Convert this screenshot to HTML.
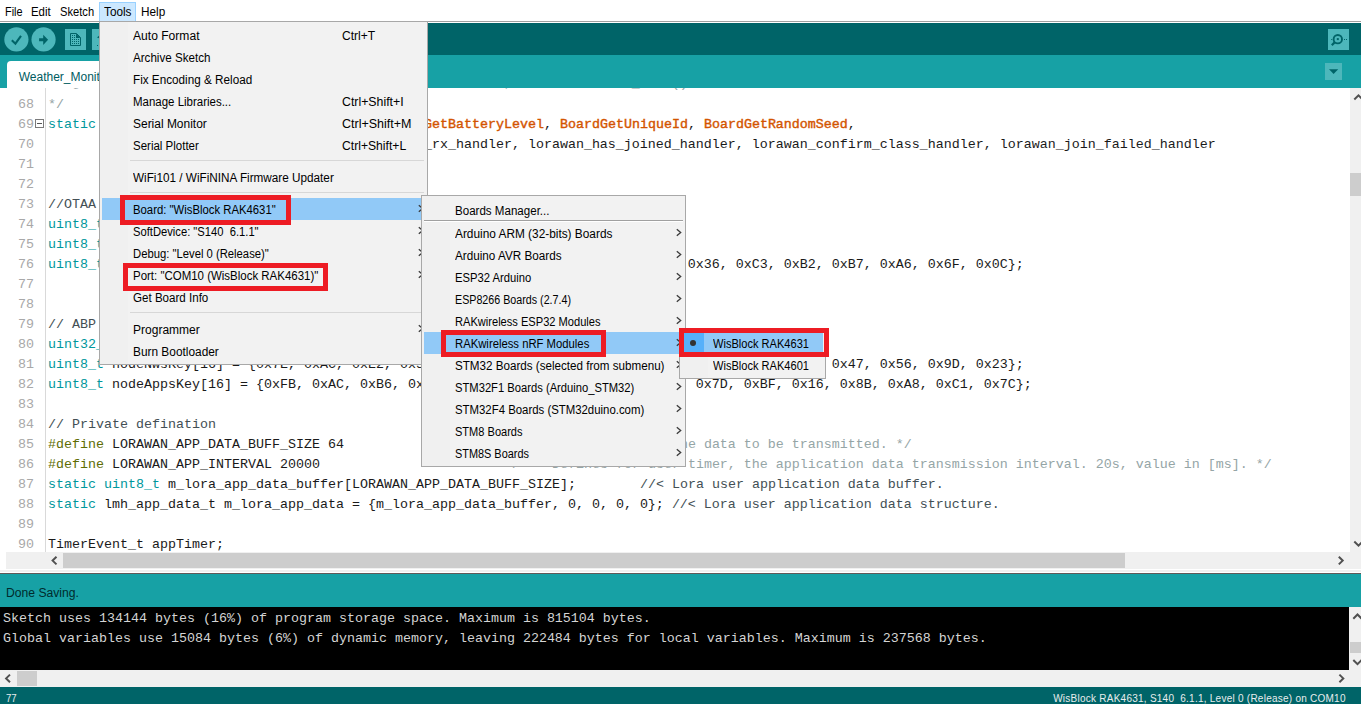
<!DOCTYPE html>
<html lang="en">
<head>
<meta charset="utf-8">
<title>Weather_Monitoring | Arduino</title>
<style>
html,body{margin:0;padding:0;}
body{width:1361px;height:704px;overflow:hidden;background:#fff;position:relative;font-family:"Liberation Sans",sans-serif;font-size:12px;color:#000;}
.abs{position:absolute;}
.t{position:absolute;white-space:pre;display:inline-block;transform-origin:0 50%;line-height:22px;height:22px;}
/* menubar */
#menubar{left:0;top:0;width:1361px;height:21px;background:#fff;border-bottom:1px solid #a0a0a0;}
#toolshl{left:99px;top:2px;width:35px;height:18px;background:#cce8ff;border:1px solid #99d1ff;}
/* toolbar */
#toolbar{left:0;top:23px;width:1361px;height:32px;background:#006468;}
#tabbar{left:0;top:55px;width:1361px;height:33px;background:#17a1a5;}
#tab{left:7px;top:61px;width:200px;height:27px;background:#fff;border-radius:4px 4px 0 0;}
.btn{background:#4db7bb;}
/* editor */
#editor{left:0;top:88px;width:1350px;height:464px;background:#fff;overflow:hidden;}
#gutterline{left:45px;top:0;width:1px;height:464px;background:#d9d9d9;}
.ln{position:absolute;left:0;height:20px;line-height:20px;white-space:pre;font-family:"Liberation Mono",monospace;font-size:13.333px;}
.ln .n{position:absolute;left:18px;top:0;color:#a8a8a8;}
.ln .c{position:absolute;left:48px;top:0;color:#1a1a1a;}
.k{color:#00979c;}
.f{color:#d35400;font-weight:normal;-webkit-text-stroke:0.4px #d35400;}
.p{color:#5e6d03;}
.cm{color:#95a5a6;}
.cs{color:#434f54;}
.fold{position:absolute;left:35px;top:4px;width:7px;height:7px;border:1px solid #7a7a7a;background:#fff;}
.fold:after{content:"";position:absolute;left:1px;top:3px;width:5px;height:1px;background:#555;}
/* scrollbars */
.sb{background:#f0f0f0;}
.th{background:#cdcdcd;}
/* status */
#status{left:0;top:574px;width:1361px;height:33px;background:#17a1a5;}
#console{left:0;top:607px;width:1349px;height:63px;background:#000;overflow:hidden;}
.cl{position:absolute;left:3px;height:20px;line-height:20px;white-space:pre;font-family:"Liberation Mono",monospace;font-size:13.333px;color:#d4d4d4;}
#bottombar{left:0;top:687px;width:1361px;height:17px;background:#006468;}
/* menus */
.menu{position:absolute;background:#f2f2f2;border:1px solid #a8a8a8;box-sizing:border-box;}
.gut{position:absolute;left:0;top:0;width:28px;height:100%;background:#f0f0f0;}
.hl{position:absolute;background:#91c9f7;}
.sep{position:absolute;height:1px;background:#d7d7d7;}
.red{position:absolute;border:5px solid #ed1c24;box-sizing:border-box;}
</style>
</head>
<body>

<!-- ===== menubar ===== -->
<div id="menubar" class="abs"></div>
<div id="toolshl" class="abs"></div>
<span class="t" style="left:4.5px;top:0.5px;font-size:12px;color:#000;transform:scaleX(0.9047)">File</span>
<span class="t" style="left:31.0px;top:0.5px;font-size:12px;color:#000;transform:scaleX(0.9523)">Edit</span>
<span class="t" style="left:60.4px;top:0.5px;font-size:12px;color:#000;transform:scaleX(0.9295)">Sketch</span>
<span class="t" style="left:103.5px;top:0.5px;font-size:12px;color:#000;transform:scaleX(0.9816)">Tools</span>
<span class="t" style="left:140.6px;top:0.5px;font-size:12px;color:#000;transform:scaleX(0.9803)">Help</span>

<!-- ===== toolbar ===== -->
<div id="toolbar" class="abs"></div>
<div id="tabbar" class="abs"></div>
<div id="tab" class="abs"></div>

<svg class="abs" style="left:0;top:23px" width="120" height="32" viewBox="0 23 120 32">
  <circle cx="16.4" cy="39.45" r="12.1" fill="#4db7bb"/>
  <path d="M11.8 40.2 L15.4 43.7 L21 35.9" fill="none" stroke="#006468" stroke-width="2.1"/>
  <circle cx="43.55" cy="39.45" r="12.1" fill="#4db7bb"/>
  <path d="M39.1 38.2 H43.2 V34.8 L48.1 39.7 L43.2 44.9 V41.2 H39.1 Z" fill="#006468"/>
  <rect x="65" y="29" width="21" height="21" fill="#4db7bb"/>
  <path d="M70.5 33.5 H76.5 L80.5 37.5 V45.5 H70.5 Z" fill="#4db7bb" stroke="#006468" stroke-width="1"/>
  <path d="M76 33.5 V38 H80.5 Z" fill="#006468"/>
  <g fill="#006468">
    <rect x="72" y="35" width="1" height="1"/><rect x="74" y="35" width="1" height="1"/>
    <rect x="72" y="37" width="1" height="1"/><rect x="74" y="37" width="1" height="1"/>
    <rect x="72" y="39" width="1" height="1"/><rect x="74" y="39" width="1" height="1"/><rect x="76" y="39" width="1" height="1"/><rect x="78" y="39" width="1" height="1"/>
    <rect x="72" y="41" width="1" height="1"/><rect x="74" y="41" width="1" height="1"/><rect x="76" y="41" width="1" height="1"/><rect x="78" y="41" width="1" height="1"/>
    <rect x="72" y="43" width="1" height="1"/><rect x="74" y="43" width="1" height="1"/><rect x="76" y="43" width="1" height="1"/><rect x="78" y="43" width="1" height="1"/>
  </g>
  <rect x="92" y="29" width="21" height="21" fill="#4db7bb"/>
  <path d="M97 37.6 L99 35.8 V38.2 Z" fill="#006468"/><rect x="97" y="45" width="1" height="1" fill="#006468"/>
</svg>
<svg class="abs" style="left:1320px;top:23px" width="41" height="65" viewBox="1320 23 41 65">
  <rect x="1328" y="29" width="21" height="21" fill="#4db7bb"/>
  <circle cx="1337.8" cy="39.2" r="4.2" fill="none" stroke="#006468" stroke-width="1.9"/>
  <rect x="1336.8" y="38.1" width="2" height="2" fill="#006468"/>
  <path d="M1334.6 42.4 L1331.8 45.2" stroke="#006468" stroke-width="2.2" fill="none"/>
  <rect x="1331.2" y="39" width="1" height="1" fill="#006468"/>
  <rect x="1344" y="39" width="1" height="1" fill="#006468"/>
  <rect x="1346" y="39" width="1" height="1" fill="#006468"/>
  <rect x="1325" y="63" width="17" height="17" fill="#4db7bb"/>
  <path d="M1329 69.2 H1338.2 L1333.6 74 Z" fill="#006468"/>
</svg>


<!-- ===== editor ===== -->
<div id="editor" class="abs">
<div id="gutterline" class="abs"></div>
<div class="ln" style="top:-14px"><span class="n">67</span><span class="c"><span class="cm">/**@brief Structure containing LoRaWan callback functions, needed for lmh_init()</span></span></div>
<div class="ln" style="top:7px"><span class="n">68</span><span class="c"><span class="cm">*/</span></span></div>
<div class="ln" style="top:27px"><span class="n">69</span><span class="fold"></span><span class="c"><span class="k">static</span> lmh_callback_t g_lora_callbacks = {<span class="f">BoardGetBatteryLevel</span>, <span class="f">BoardGetUniqueId</span>, <span class="f">BoardGetRandomSeed</span>,</span></div>
<div class="ln" style="top:47px"><span class="n">70</span><span class="c">                                        lorawan_rx_handler, lorawan_has_joined_handler, lorawan_confirm_class_handler, lorawan_join_failed_handler</span></div>
<div class="ln" style="top:67px"><span class="n">71</span><span class="c"></span></div>
<div class="ln" style="top:87px"><span class="n">72</span><span class="c"></span></div>
<div class="ln" style="top:107px"><span class="n">73</span><span class="c"><span class="cs">//OTAA keys !!!! KEYS ARE MSB !!!!</span></span></div>
<div class="ln" style="top:127px"><span class="n">74</span><span class="c"><span class="k">uint8_t</span> nodeDeviceEUI[8] = {0x00, 0x95, 0x64, 0x1F, 0xDA, 0x91, 0x19, 0x0B};</span></div>
<div class="ln" style="top:147px"><span class="n">75</span><span class="c"><span class="k">uint8_t</span> nodeAppEUI[8] = {0x70, 0xB3, 0xD5, 0x7E, 0xD0, 0x02, 0x01, 0xE1};</span></div>
<div class="ln" style="top:167px"><span class="n">76</span><span class="c"><span class="k">uint8_t</span> nodeAppKey[16] = {0x07, 0xC0, 0x82, 0x0C, 0x30, 0xB9, 0x08, 0x70, 0x0C, 0x36, 0xC3, 0xB2, 0xB7, 0xA6, 0x6F, 0x0C};</span></div>
<div class="ln" style="top:187px"><span class="n">77</span><span class="c"></span></div>
<div class="ln" style="top:207px"><span class="n">78</span><span class="c"></span></div>
<div class="ln" style="top:227px"><span class="n">79</span><span class="c"><span class="cs">// ABP keys</span></span></div>
<div class="ln" style="top:247px"><span class="n">80</span><span class="c"><span class="k">uint32_t</span> nodeDevAddr = 0x260116F8;</span></div>
<div class="ln" style="top:267px"><span class="n">81</span><span class="c"><span class="k">uint8_t</span> nodeNwsKey[16] = {0x7E, 0xAC, 0xE2, 0x55, 0xB8, 0xA5, 0xE2, 0x69, 0x91, 0x51, 0x96, 0x06, 0x47, 0x56, 0x9D, 0x23};</span></div>
<div class="ln" style="top:287px"><span class="n">82</span><span class="c"><span class="k">uint8_t</span> nodeAppsKey[16] = {0xFB, 0xAC, 0xB6, 0x47, 0xF3, 0x58, 0x45, 0xC7, 0x50, 0x7D, 0xBF, 0x16, 0x8B, 0xA8, 0xC1, 0x7C};</span></div>
<div class="ln" style="top:307px"><span class="n">83</span><span class="c"></span></div>
<div class="ln" style="top:327px"><span class="n">84</span><span class="c"><span class="cs">// Private defination</span></span></div>
<div class="ln" style="top:347px"><span class="n">85</span><span class="c"><span class="p">#define</span> LORAWAN_APP_DATA_BUFF_SIZE 64                     <span class="cm">/**&lt; buffer size of the data to be transmitted. */</span></span></div>
<div class="ln" style="top:367px"><span class="n">86</span><span class="c"><span class="p">#define</span> LORAWAN_APP_INTERVAL 20000                        <span class="cm">/**&lt; Defines for user timer, the application data transmission interval. 20s, value in [ms]. */</span></span></div>
<div class="ln" style="top:387px"><span class="n">87</span><span class="c"><span class="k">static</span> <span class="k">uint8_t</span> m_lora_app_data_buffer[LORAWAN_APP_DATA_BUFF_SIZE];        <span class="cs">//&lt; Lora user application data buffer.</span></span></div>
<div class="ln" style="top:407px"><span class="n">88</span><span class="c"><span class="k">static</span> lmh_app_data_t m_lora_app_data = {m_lora_app_data_buffer, 0, 0, 0, 0}; <span class="cs">//&lt; Lora user application data structure.</span></span></div>
<div class="ln" style="top:427px"><span class="n">89</span><span class="c"></span></div>
<div class="ln" style="top:447px"><span class="n">90</span><span class="c">TimerEvent_t appTimer;</span></div>
</div>


<!-- editor vertical scrollbar -->
<div class="abs sb" style="left:1350px;top:88px;width:11px;height:464px;"></div>
<div class="abs th" style="left:1350px;top:173px;width:11px;height:23px;"></div>
<!-- editor horizontal scrollbar -->
<div class="abs sb" style="left:6px;top:552px;width:1355px;height:17px;"></div>
<div class="abs th" style="left:63px;top:553px;width:1062px;height:15px;"></div>
<!-- console scrollbars -->
<div class="abs sb" style="left:1349px;top:607px;width:12px;height:63px;"></div>
<div class="abs th" style="left:1350px;top:642px;width:11px;height:11px;"></div>
<div class="abs sb" style="left:0;top:670px;width:1361px;height:17px;"></div>
<div class="abs th" style="left:17px;top:671px;width:20px;height:15px;"></div>
<svg class="abs" style="left:0;top:0" width="1361" height="704" viewBox="0 0 1361 704" fill="none" stroke="#505050" stroke-width="2">
  <path d="M1354.3 99.5 L1358.5 95.3 L1362.7 99.5"/>
  <path d="M1354.3 541.5 L1358.5 545.7 L1362.7 541.5"/>
  <path d="M56.5 556.8 L52.6 560.6 L56.5 564.4"/>
  <path d="M1338.8 556.8 L1342.7 560.6 L1338.8 564.4"/>
  <path d="M1353.3 618.7 L1357.5 614.5 L1361.7 618.7"/>
  <path d="M1353.3 660 L1357.5 664.2 L1361.7 660"/>
  <path d="M10 674.6 L6.1 678.4 L10 682.2"/>
  <path d="M1339.4 674.6 L1343.3 678.4 L1339.4 682.2"/>
</svg>


<!-- ===== status / console ===== -->
<div class="abs" style="left:0;top:570px;width:1361px;height:2px;background:#f0f0f0;"></div>
<div class="abs" style="left:0;top:573px;width:1361px;height:1px;background:#5f5959;"></div>
<div id="status" class="abs"></div>
<div id="console" class="abs">
<div class="cl" style="top:2px">Sketch uses 134144 bytes (16%) of program storage space. Maximum is 815104 bytes.</div>
<div class="cl" style="top:22px">Global variables use 15084 bytes (6%) of dynamic memory, leaving 222484 bytes for local variables. Maximum is 237568 bytes.</div>
</div>
<div id="bottombar" class="abs"></div>
<span class="t" style="left:18.7px;top:65.5px;font-size:12px;color:#005c5f;transform:scaleX(1.0000)">Weather_Monitoring</span>
<span class="t" style="left:5.8px;top:581.5px;font-size:12px;color:#002b2d;transform:scaleX(1.0118)">Done Saving.</span>
<span class="t" style="left:6.3px;top:688.3px;font-size:10px;color:#e8eded;transform:scaleX(0.9618)">77</span>
<span class="t" style="left:1053.2px;top:688.3px;font-size:10px;color:#e8eded;letter-spacing:0.247px">WisBlock RAK4631, S140  6.1.1, Level 0 (Release) on COM10</span>

<!-- ===== menus ===== -->
<div class="menu" style="left:99px;top:21px;width:329px;height:344px;"><div class="gut"></div></div>
<div class="hl" style="left:102px;top:198px;width:323px;height:22px;"></div>
<div class="sep" style="left:130px;top:160px;width:294px;"></div>
<div class="sep" style="left:130px;top:192px;width:294px;"></div>
<div class="sep" style="left:130px;top:312px;width:294px;"></div>
<span class="t" style="left:133.3px;top:25.0px;font-size:12px;color:#000;transform:scaleX(1.0071)">Auto Format</span>
<span class="t" style="left:342.3px;top:25.0px;font-size:12px;color:#000;transform:scaleX(1.0030)">Ctrl+T</span>
<span class="t" style="left:133.3px;top:47.0px;font-size:12px;color:#000;transform:scaleX(0.9669)">Archive Sketch</span>
<span class="t" style="left:133.3px;top:69.0px;font-size:12px;color:#000;transform:scaleX(0.9764)">Fix Encoding &amp; Reload</span>
<span class="t" style="left:133.3px;top:91.0px;font-size:12px;color:#000;transform:scaleX(0.9559)">Manage Libraries...</span>
<span class="t" style="left:342.3px;top:91.0px;font-size:12px;color:#000;transform:scaleX(1.0261)">Ctrl+Shift+I</span>
<span class="t" style="left:133.3px;top:113.0px;font-size:12px;color:#000;transform:scaleX(0.9969)">Serial Monitor</span>
<span class="t" style="left:342.3px;top:113.0px;font-size:12px;color:#000;transform:scaleX(1.0422)">Ctrl+Shift+M</span>
<span class="t" style="left:133.3px;top:135.0px;font-size:12px;color:#000;transform:scaleX(0.9577)">Serial Plotter</span>
<span class="t" style="left:342.3px;top:135.0px;font-size:12px;color:#000;transform:scaleX(1.0130)">Ctrl+Shift+L</span>
<span class="t" style="left:133.3px;top:167.0px;font-size:12px;color:#000;transform:scaleX(0.9777)">WiFi101 / WiFiNINA Firmware Updater</span>
<span class="t" style="left:133.3px;top:199.0px;font-size:12px;color:#000;transform:scaleX(0.9435)">Board: "WisBlock RAK4631"</span>
<span class="t" style="left:133.3px;top:221.0px;font-size:12px;color:#000;transform:scaleX(0.9331)">SoftDevice: "S140  6.1.1"</span>
<span class="t" style="left:133.3px;top:243.0px;font-size:12px;color:#000;transform:scaleX(0.9391)">Debug: "Level 0 (Release)"</span>
<span class="t" style="left:133.3px;top:265.0px;font-size:12px;color:#000;transform:scaleX(0.9556)">Port: "COM10 (WisBlock RAK4631)"</span>
<span class="t" style="left:133.3px;top:287.0px;font-size:12px;color:#000;transform:scaleX(0.9648)">Get Board Info</span>
<span class="t" style="left:133.3px;top:319.0px;font-size:12px;color:#000;transform:scaleX(1.0017)">Programmer</span>
<span class="t" style="left:133.3px;top:341.0px;font-size:12px;color:#000;transform:scaleX(0.9892)">Burn Bootloader</span>
<svg class="abs" style="left:0;top:0" width="1361" height="704" viewBox="0 0 1361 704" fill="none" stroke="#3a3a3a" stroke-width="1.3">
<path d="M418.8 205.2 L422.7 208.5 L418.8 211.8"/>
<path d="M418.8 227.2 L422.7 230.5 L418.8 233.8"/>
<path d="M418.8 249.2 L422.7 252.5 L418.8 255.8"/>
<path d="M418.8 271.2 L422.7 274.5 L418.8 277.8"/>
<path d="M418.8 325.2 L422.7 328.5 L418.8 331.8"/>
</svg>
<div class="red" style="left:120px;top:195px;width:171px;height:30px;"></div>
<div class="red" style="left:123px;top:263px;width:205px;height:28px;"></div>
<div class="menu" style="left:421px;top:195px;width:265px;height:272px;"><div class="gut"></div></div>
<div class="hl" style="left:424px;top:332px;width:259px;height:22px;"></div>
<div class="sep" style="left:424px;top:220px;width:259px;background:#a0a0a0;"></div>
<div class="sep" style="left:424px;top:221px;width:259px;background:#fff;"></div>
<span class="t" style="left:455.3px;top:199.5px;font-size:12px;color:#000;transform:scaleX(0.9637)">Boards Manager...</span>
<span class="t" style="left:455.3px;top:222.5px;font-size:12px;color:#000;transform:scaleX(0.9874)">Arduino ARM (32-bits) Boards</span>
<span class="t" style="left:455.3px;top:244.5px;font-size:12px;color:#000;transform:scaleX(0.9755)">Arduino AVR Boards</span>
<span class="t" style="left:455.3px;top:266.5px;font-size:12px;color:#000;transform:scaleX(0.9360)">ESP32 Arduino</span>
<span class="t" style="left:455.3px;top:288.5px;font-size:12px;color:#000;transform:scaleX(0.8918)">ESP8266 Boards (2.7.4)</span>
<span class="t" style="left:455.3px;top:310.5px;font-size:12px;color:#000;transform:scaleX(0.9244)">RAKwireless ESP32 Modules</span>
<span class="t" style="left:455.3px;top:332.5px;font-size:12px;color:#000;transform:scaleX(0.9410)">RAKwireless nRF Modules</span>
<span class="t" style="left:455.3px;top:354.5px;font-size:12px;color:#000;transform:scaleX(0.9695)">STM32 Boards (selected from submenu)</span>
<span class="t" style="left:455.3px;top:376.5px;font-size:12px;color:#000;transform:scaleX(0.9335)">STM32F1 Boards (Arduino_STM32)</span>
<span class="t" style="left:455.3px;top:398.5px;font-size:12px;color:#000;transform:scaleX(0.9488)">STM32F4 Boards (STM32duino.com)</span>
<span class="t" style="left:455.3px;top:420.5px;font-size:12px;color:#000;transform:scaleX(0.9201)">STM8 Boards</span>
<span class="t" style="left:455.3px;top:442.5px;font-size:12px;color:#000;transform:scaleX(0.9081)">STM8S Boards</span>
<svg class="abs" style="left:0;top:0" width="1361" height="704" viewBox="0 0 1361 704" fill="none" stroke="#3a3a3a" stroke-width="1.3">
<path d="M676.8 229.2 L680.7 232.5 L676.8 235.8"/>
<path d="M676.8 251.2 L680.7 254.5 L676.8 257.8"/>
<path d="M676.8 273.2 L680.7 276.5 L676.8 279.8"/>
<path d="M676.8 295.2 L680.7 298.5 L676.8 301.8"/>
<path d="M676.8 317.2 L680.7 320.5 L676.8 323.8"/>
<path d="M676.8 339.2 L680.7 342.5 L676.8 345.8"/>
<path d="M676.8 361.2 L680.7 364.5 L676.8 367.8"/>
<path d="M676.8 383.2 L680.7 386.5 L676.8 389.8"/>
<path d="M676.8 405.2 L680.7 408.5 L676.8 411.8"/>
<path d="M676.8 427.2 L680.7 430.5 L676.8 433.8"/>
<path d="M676.8 449.2 L680.7 452.5 L676.8 455.8"/>
</svg>
<div class="red" style="left:441px;top:330px;width:165px;height:27px;"></div>
<div class="menu" style="left:679px;top:329px;width:147px;height:50px;"><div class="gut"></div></div>
<div class="hl" style="left:682px;top:332px;width:141px;height:22px;"></div>
<div class="abs" style="left:682px;top:332px;width:22px;height:22px;background:#56b0fa;"></div>
<div class="abs" style="left:689.7px;top:339.7px;width:6.4px;height:6.4px;border-radius:50%;background:#333;"></div>
<span class="t" style="left:713.0px;top:333.0px;font-size:12px;color:#000;transform:scaleX(0.9227)">WisBlock RAK4631</span>
<span class="t" style="left:713.0px;top:355.0px;font-size:12px;color:#000;transform:scaleX(0.9227)">WisBlock RAK4601</span>
<div class="red" style="left:679px;top:328px;width:150px;height:29px;"></div>

</body>
</html>
